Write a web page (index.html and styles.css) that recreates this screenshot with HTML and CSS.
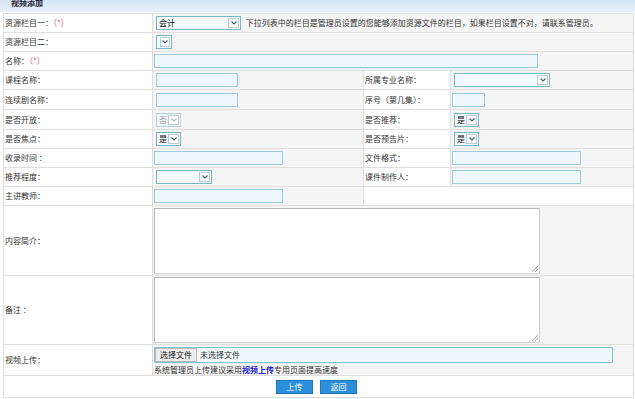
FILE: index.html
```html
<!DOCTYPE html>
<html lang="zh-CN">

<head>
    <meta charset="UTF-8">
    <title>视频添加</title>
    <link rel="stylesheet" href="styles.css">
</head>

<body>
    <div class="title-bar">视频添加</div>

    <table class="form-table">
        <colgroup>
            <col class="c1">
            <col class="c2">
            <col class="c3">
            <col class="c4">
        </colgroup>
        <tr>
            <td class="label">资源栏目一：<span class="req">（*）</span></td>
            <td class="value" colspan="3">
                <span class="sel w-lg"><span class="sel-text">会计</span><span class="sel-arrow"><svg width="6" height="4" viewBox="0 0 6 4"><path d="M0.5 0.5 L3 3 L5.5 0.5" fill="none" stroke="#3d5f78" stroke-width="1.1"/></svg></span></span>
                <span class="hint">下拉列表中的栏目是管理员设置的您能够添加资源文件的栏目，如果栏目设置不对，请联系管理员。</span>
            </td>
        </tr>
        <tr>
            <td class="label">资源栏目二：</td>
            <td class="value" colspan="3">
                <span class="sel w-xs"><span class="sel-text"></span><span class="sel-arrow"><svg width="6" height="4" viewBox="0 0 6 4"><path d="M0.5 0.5 L3 3 L5.5 0.5" fill="none" stroke="#3d5f78" stroke-width="1.1"/></svg></span></span>
            </td>
        </tr>
        <tr>
            <td class="label">名称：<span class="req">（*）</span></td>
            <td class="value" colspan="3"><span class="txt w-full"></span></td>
        </tr>
        <tr>
            <td class="label">课程名称：</td>
            <td class="value"><span class="txt w-sm ml"></span></td>
            <td class="label">所属专业名称：</td>
            <td class="value">
                <span class="sel w-md"><span class="sel-text"></span><span class="sel-arrow"><svg width="6" height="4" viewBox="0 0 6 4"><path d="M0.5 0.5 L3 3 L5.5 0.5" fill="none" stroke="#3d5f78" stroke-width="1.1"/></svg></span></span>
            </td>
        </tr>
        <tr class="row-20">
            <td class="label">连续剧名称：</td>
            <td class="value"><span class="txt w-sm ml"></span></td>
            <td class="label">序号（第几集）：</td>
            <td class="value"><span class="txt w-tiny"></span></td>
        </tr>
        <tr class="row-20">
            <td class="label">是否开放：</td>
            <td class="value">
                <span class="sel w-yn disabled"><span class="sel-text">否</span><span class="sel-arrow"><svg width="6" height="4" viewBox="0 0 6 4"><path d="M0.5 0.5 L3 3 L5.5 0.5" fill="none" stroke="#a9b9c4" stroke-width="1.1"/></svg></span></span>
            </td>
            <td class="label">是否推荐：</td>
            <td class="value">
                <span class="sel w-yn"><span class="sel-text">是</span><span class="sel-arrow"><svg width="6" height="4" viewBox="0 0 6 4"><path d="M0.5 0.5 L3 3 L5.5 0.5" fill="none" stroke="#3d5f78" stroke-width="1.1"/></svg></span></span>
            </td>
        </tr>
        <tr>
            <td class="label">是否焦点：</td>
            <td class="value">
                <span class="sel w-yn"><span class="sel-text">是</span><span class="sel-arrow"><svg width="6" height="4" viewBox="0 0 6 4"><path d="M0.5 0.5 L3 3 L5.5 0.5" fill="none" stroke="#3d5f78" stroke-width="1.1"/></svg></span></span>
            </td>
            <td class="label">是否预告片：</td>
            <td class="value">
                <span class="sel w-yn"><span class="sel-text">是</span><span class="sel-arrow"><svg width="6" height="4" viewBox="0 0 6 4"><path d="M0.5 0.5 L3 3 L5.5 0.5" fill="none" stroke="#3d5f78" stroke-width="1.1"/></svg></span></span>
            </td>
        </tr>
        <tr>
            <td class="label">收录时间 ：</td>
            <td class="value"><span class="txt w-mid"></span></td>
            <td class="label">文件格式：</td>
            <td class="value"><span class="txt w-mid"></span></td>
        </tr>
        <tr>
            <td class="label">推荐程度：</td>
            <td class="value">
                <span class="sel w-rec"><span class="sel-text"></span><span class="sel-arrow"><svg width="6" height="4" viewBox="0 0 6 4"><path d="M0.5 0.5 L3 3 L5.5 0.5" fill="none" stroke="#3d5f78" stroke-width="1.1"/></svg></span></span>
            </td>
            <td class="label">课件制作人：</td>
            <td class="value"><span class="txt w-mid"></span></td>
        </tr>
        <tr>
            <td class="label">主讲教师：</td>
            <td class="value"><span class="txt w-mid"></span></td>
            <td class="blank" colspan="2"></td>
        </tr>
        <tr class="tall">
            <td class="label">内容简介：</td>
            <td class="value" colspan="3"><span class="area"><span class="grip"></span></span></td>
        </tr>
        <tr class="tall tall-b">
            <td class="label">备注 ：</td>
            <td class="value" colspan="3"><span class="area"><span class="grip"></span></span></td>
        </tr>
        <tr class="upload-row">
            <td class="label">视频上传：</td>
            <td class="value" colspan="3">
                <div class="file-box"><span class="file-btn">选择文件</span><span class="file-name">未选择文件</span></div>
                <div class="upload-tip">系统管理员上传建议采用<a href="#" class="tip-link">视频上传</a>专用页面提高速度</div>
            </td>
        </tr>
        <tr class="btn-row">
            <td colspan="4">
                <div class="actions">
                    <button class="btn">上传</button>
                    <button class="btn">返回</button>
                </div>
            </td>
        </tr>
    </table>
</body>

</html>
```

FILE: styles.css
```css
/* Global */
:root {
    --line: #dedede;
    --cell-gray: #f5f5f5;
    --field-bg: #eef7fc;
    --field-border: #9fcbd8;
    --btn-blue: #2b8fdb;
}

* {
    margin: 0;
    padding: 0;
    box-sizing: border-box;
}

body {
    font-family: "Noto Sans CJK SC", "Noto Sans", sans-serif;
    font-size: 8px;
    color: #333;
    background: #fff;
}

/* Title bar */
.title-bar {
    height: 12px;
    line-height: 5px;
    padding-left: 11px;
    font-weight: bold;
    color: #223;
    background: linear-gradient(#d6e6f4, #e7f0f9);
    margin-bottom: 1px;
}

/* Form table */
.form-table {
    width: 630px;
    margin-left: 3px;
    border-collapse: collapse;
    table-layout: fixed;
    border: 1px solid var(--line);
}

.c1 { width: 149px; }
.c2 { width: 211px; }
.c3 { width: 87px; }
.c4 { width: 183px; }

.form-table td {
    height: 19px;
    border: 1px solid var(--line);
    vertical-align: middle;
    line-height: 10px;
    white-space: nowrap;
}

.form-table .row-20 td {
    height: 20px;
}

.label {
    background: #fff;
    padding-left: 1px;
}

.value {
    background: var(--cell-gray);
    padding-left: 1px;
}

.blank {
    background: #fff;
}

.req {
    color: #e0457b;
}

.hint {
    margin-left: 3px;
    vertical-align: middle;
}

/* Text inputs */
.txt {
    display: inline-block;
    vertical-align: middle;
    height: 14px;
    background: var(--field-bg);
    border: 1px solid var(--field-border);
}

.ml { margin-left: 2px; }
.w-full { width: 384px; }
.w-sm { width: 82px; }
.w-tiny { width: 33px; }
.w-mid { width: 129px; }

/* Select boxes */
.sel {
    display: inline-flex;
    vertical-align: middle;
    height: 14px;
    margin-left: 2px;
    border: 1px solid #79b6c3;
    background: #f3f9fc;
}

.sel-text {
    flex: 1;
    padding-left: 2px;
    line-height: 12px;
    color: #111;
}

.sel-arrow {
    width: 11px;
    margin: 1px;
    border: 1px solid #b9cdd5;
    background: #fff;
    display: flex;
    align-items: center;
    justify-content: center;
}

.w-lg { width: 85px; }
.w-xs { width: 16px; }
.w-md { width: 96px; }
.w-yn { width: 25px; }
.w-rec { width: 56px; }

.sel.disabled {
    border-color: #b8d3da;
}

.sel.disabled .sel-text {
    color: #999;
}

/* Textareas */
.form-table .tall td {
    height: 70px;
}

.form-table .tall-b td {
    height: 69px;
}

.area {
    display: block;
    position: relative;
    width: 386px;
    height: 66px;
    background: #fff;
    border: 1px solid #cfcfcf;
    border-top-color: #b5b5b5;
    border-left-color: #b5b5b5;
}

.grip {
    position: absolute;
    right: 1px;
    bottom: 1px;
    width: 6px;
    height: 6px;
    background: linear-gradient(135deg, transparent 45%, #b0b0b0 46%, #b0b0b0 55%, transparent 56%, transparent 70%, #b0b0b0 71%, #b0b0b0 80%, transparent 81%);
}

/* Upload */
.form-table .upload-row td {
    height: 31px;
}

.file-box {
    display: flex;
    align-items: center;
    width: 459px;
    height: 16px;
    margin-top: 1px;
    background: var(--field-bg);
    border: 1px solid #7ec3cf;
}

.file-btn {
    height: 14px;
    line-height: 12px;
    padding: 0 4px;
    background: #ececec;
    border: 1px solid #b8b8b8;
    color: #111;
}

.file-name {
    margin-left: 3px;
}

.upload-tip {
    margin-top: 2px;
    line-height: 10px;
}

.tip-link {
    color: #2323c8;
    font-weight: bold;
    text-decoration: none;
}

/* Buttons */
.form-table .btn-row td {
    height: 22px;
    background: #fff;
}

.actions {
    display: flex;
    justify-content: center;
    gap: 7px;
    padding-right: 4px;
}

.btn {
    width: 37px;
    height: 14px;
    font-family: inherit;
    font-size: 8px;
    color: #fff;
    background: var(--btn-blue);
    border: 1px solid #1f75b8;
    cursor: pointer;
}
```
